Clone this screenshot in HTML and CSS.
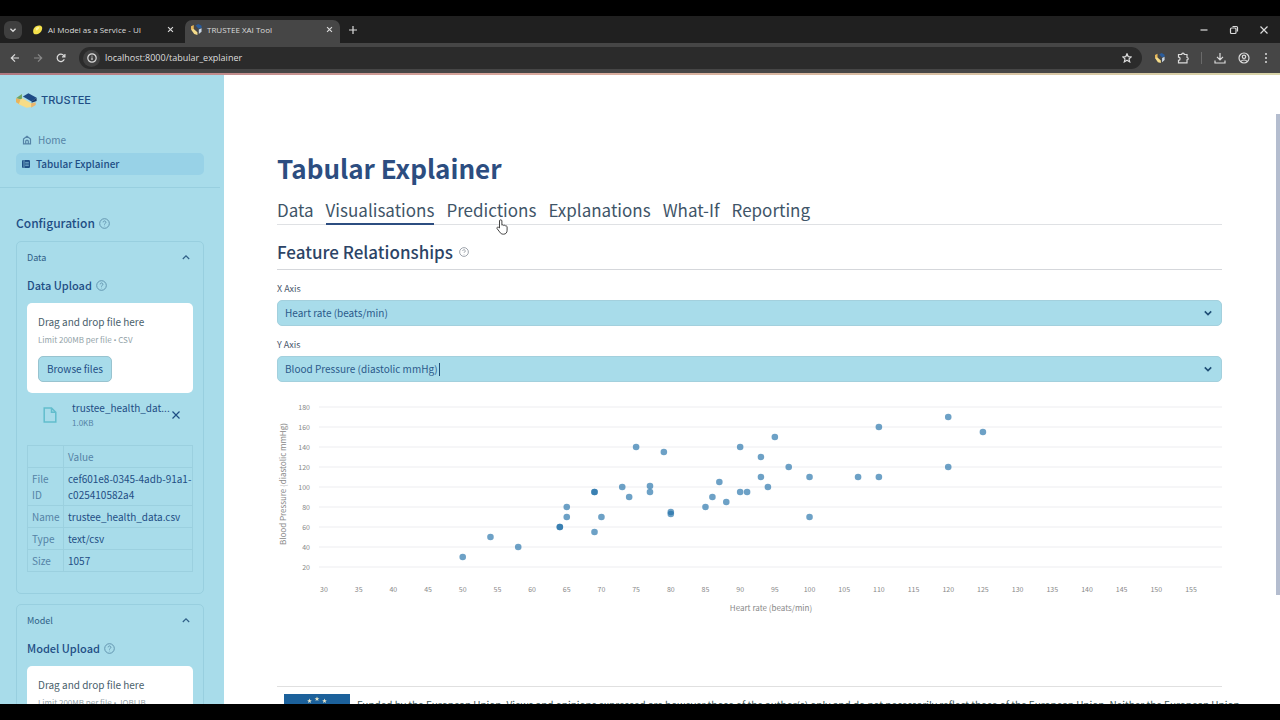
FILE: index.html
```html
<!DOCTYPE html>
<html lang="en">
<head>
<meta charset="utf-8">
<meta name="viewport" content="width=device-width, initial-scale=1">
<title>TRUSTEE XAI Tool</title>
<link rel="stylesheet" href="styles.css">
</head>
<body>

<!-- shared icons -->
<svg class="defs" aria-hidden="true">
  <symbol id="help" viewBox="0 0 24 24">
    <circle cx="12" cy="12" r="10.5"/>
    <path d="M9 9.5a3 3 0 1 1 4.6 2.5c-1 .6-1.6 1.2-1.6 2.3M12 17v1"/>
  </symbol>
  <symbol id="up" viewBox="0 0 10 10"><path d="M1.8 6 5 2.800l3.200 3.200"/></symbol>
  <symbol id="down" viewBox="0 0 10 10"><path d="M1.8 3.4 5 6.6l3.2-3.2"/></symbol>
  <symbol id="cross" viewBox="0 0 10 10"><path d="m1.5 1.5 7 7m0-7-7 7"/></symbol>
  <symbol id="mark" viewBox="0 0 24 16">
    <path fill="#6fa563" d="M0 5.500 6.500 1v6z"/>
    <path fill="#e9b45c" d="M0 5.500 5 7v6L0 10z"/>
    <path fill="#f7dc86" d="m5 7 2-1.500 9.500 5.500V15l-5 1L3 12z"/>
    <path fill="#1d4a86" d="m7.500 3.500 6-3.500 9 5-5.500 4z"/>
    <path fill="#17396c" d="m17 9 5.500-4v3.500L17 10.500z"/>
    <path fill="#eab56c" d="m16.500 11 5-1v3l-5 3z"/>
  </symbol>
  <symbol id="swirl" viewBox="0 0 12 12">
    <path fill="#e8b85a" d="M0 2.500 3 1v6L0 6z"/>
    <path fill="#f5dc8a" d="m0 6 3-.5 4 3.500v3L3.500 11z"/>
    <path fill="#2a5c9c" d="m5 1.500 3-1.500 3.500 2v2.500L8 5z"/>
    <path fill="#c9d6e4" d="m8.500 6 3-1.500v4l-3 2.500z"/>
  </symbol>
</svg>

<!-- browser chrome -->
<header class="browser">
  <div class="tabstrip">
    <button class="tab-search" aria-label="Search tabs"><svg class="line"><use href="#down"/></svg></button>
    <div class="btab">
      <svg class="fav" viewBox="0 0 12 12"><path fill="#f3e04a" d="M2 10.500C.5 8 1.500 4 4.500 2.500 7 1 10.500 1.500 11 3.500c.6 3-1.500 6-4 7-2 .8-4 .8-5 0z"/><path fill="#fff6a0" d="M4 5c1-1.500 3-2 4-1.500C8 5 6 7 4.500 7z"/></svg>
      <span>AI Model as a Service - UI</span>
      <button class="x" aria-label="Close tab"><svg class="line"><use href="#cross"/></svg></button>
    </div>
    <div class="btab current">
      <svg class="fav"><use href="#swirl"/></svg>
      <span>TRUSTEE XAI Tool</span>
      <button class="x" aria-label="Close tab"><svg class="line"><use href="#cross"/></svg></button>
    </div>
    <button class="newtab" aria-label="New tab"><svg class="line" viewBox="0 0 10 10"><path d="M5 1v8M1 5h8"/></svg></button>
    <div class="wincontrols">
      <button aria-label="Minimize"><svg class="line" viewBox="0 0 10 10"><path d="M1.500 5h7"/></svg></button>
      <button aria-label="Restore"><svg class="line" viewBox="0 0 10 10"><rect x="1.500" y="3" width="5.500" height="5.500" rx="1"/><path d="M3.500 1.500H7.500a1 1 0 0 1 1 1V6.500"/></svg></button>
      <button aria-label="Close"><svg class="line"><use href="#cross"/></svg></button>
    </div>
  </div>
  <div class="toolbar">
    <button aria-label="Back"><svg class="line" viewBox="0 0 10 10"><path d="M9 5H1.500M5 1.300 1.300 5 5 8.700"/></svg></button>
    <button aria-label="Forward" disabled><svg class="line" viewBox="0 0 10 10"><path d="M1 5h7.500M5 1.300 8.700 5 5 8.700"/></svg></button>
    <button aria-label="Reload"><svg class="line" viewBox="0 0 10 10"><path d="M8.300 6.300A3.700 3.700 0 1 1 7.800 2.600L8.800 3.700M8.900 1v2.900H6"/></svg></button>
    <div class="omnibox">
      <span class="info"><svg class="line" viewBox="0 0 10 10"><circle cx="5" cy="5" r="4.200"/><path d="M5 4.500v2.600M5 2.700v.8"/></svg></span>
      <input type="text" aria-label="Address" value="localhost:8000/tabular_explainer">
      <button aria-label="Bookmark"><svg class="line" viewBox="0 0 10 10"><path d="m5 .8 1.200 2.800 3 .3L7 5.900l.7 3L5 7.300 2.300 8.900l.7-3L.8 3.900l3-.3z"/></svg></button>
    </div>
    <div class="actions">
      <button aria-label="TRUSTEE extension"><svg class="ext"><use href="#swirl"/></svg></button>
      <button aria-label="Extensions"><svg class="line big" viewBox="0 0 12 12"><path d="M1.500 2.500h3.200a1.300 1.300 0 0 1 2.600 0h2.700v3a1.200 1.200 0 0 1 0 2.400v3H1.500V8.300a1.600 1.600 0 0 0 0-3.200z"/></svg></button>
      <span class="bar"></span>
      <button aria-label="Downloads"><svg class="line big" viewBox="0 0 12 12"><path d="M6 1v6.500M3 4.800l3 3 3-3M1 8.500V11h10V8.500"/></svg></button>
      <button aria-label="Profile"><svg class="line big" viewBox="0 0 12 12"><circle cx="6" cy="6" r="5"/><circle cx="6" cy="4.800" r="1.700"/><path d="M2.800 9.500c1.500-2 5-2 6.400 0"/></svg></button>
      <button aria-label="Menu"><svg class="dots" viewBox="0 0 8 12"><circle cx="4" cy="2" r="1"/><circle cx="4" cy="6" r="1"/><circle cx="4" cy="10" r="1"/></svg></button>
    </div>
  </div>
</header>

<div class="app">

  <!-- sidebar -->
  <aside class="sidebar">
    <div class="logo"><svg><use href="#mark"/></svg>TRUSTEE</div>
    <nav>
      <a href="#"><svg class="line" viewBox="0 0 10 10"><path d="M1.500 4 5 1.200 8.500 4v4.800h-7zM3.700 8.800V6.500a1.300 1.300 0 0 1 2.600 0v2.300"/></svg>Home</a>
      <a href="#" class="active"><svg viewBox="0 0 10 10"><rect x="0" y="0" width="10" height="10" rx="1.500" fill="#1f4e85"/><path d="M2.500 0v10M4 3h4.500M4 5h4.500M4 7h4.500" stroke="#9bd3e8" stroke-width=".8"/></svg>Tabular Explainer</a>
    </nav>
    <div class="config">
      <h2>Configuration <svg class="help"><use href="#help"/></svg></h2>

      <section class="expander">
        <button class="summary">Data <svg class="line"><use href="#up"/></svg></button>
        <h3>Data Upload <svg class="help"><use href="#help"/></svg></h3>
        <div class="dropzone">
          <p>Drag and drop file here</p>
          <small>Limit 200MB per file <span class="bullet">•</span> CSV</small>
          <button class="browse">Browse files</button>
        </div>
        <div class="file">
          <svg class="doc" viewBox="0 0 14 16"><path d="M1.200 1h7.300l4.300 4.300V15H1.200zM8.500 1v4.300h4.300"/></svg>
          <div class="filename"><p title="trustee_health_data.csv">trustee_health_dat...</p><small>1.0KB</small></div>
          <button aria-label="Remove file"><svg class="line"><use href="#cross"/></svg></button>
        </div>
        <table>
          <tr><th></th><th>Value</th></tr>
          <tr><th>File<br>ID</th><td>cef601e8-0345-4adb-91a1-<br>c025410582a4</td></tr>
          <tr><th>Name</th><td>trustee_health_data.csv</td></tr>
          <tr><th>Type</th><td>text/csv</td></tr>
          <tr><th>Size</th><td>1057</td></tr>
        </table>
      </section>

      <section class="expander">
        <button class="summary">Model <svg class="line"><use href="#up"/></svg></button>
        <h3>Model Upload <svg class="help"><use href="#help"/></svg></h3>
        <div class="dropzone">
          <p>Drag and drop file here</p>
          <small>Limit 200MB per file <span class="bullet">•</span> JOBLIB</small>
        </div>
      </section>
    </div>
  </aside>

  <!-- main -->
  <main>
    <h1>Tabular Explainer</h1>
    <div class="tabs" role="tablist">
      <button role="tab">Data</button>
      <button role="tab" class="selected" aria-selected="true">Visualisations</button>
      <button role="tab">Predictions
        <svg class="pointer" viewBox="0 0 12 16"><path d="M3.500 9V2a1.200 1.200 0 0 1 2.400 0v4.200c.5-.6 1.600-.5 1.800.3.600-.5 1.600-.3 1.700.5.700-.4 1.700 0 1.700.9v3.300c0 2.400-1.200 4-3.600 4-2 0-3-.9-3.900-2.300L1 9.500c-.4-1 .7-1.800 1.500-1.200z"/></svg>
      </button>
      <button role="tab">Explanations</button>
      <button role="tab">What-If</button>
      <button role="tab">Reporting</button>
    </div>
    <h2>Feature Relationships <svg class="help"><use href="#help"/></svg></h2>

    <label for="xaxis">X Axis</label>
    <div class="select">
      <select id="xaxis"><option>Heart rate (beats/min)</option></select>
      <svg class="line"><use href="#down"/></svg>
    </div>
    <label for="yaxis">Y Axis</label>
    <div class="select">
      <select id="yaxis"><option>Blood Pressure (diastolic mmHg)</option></select>
      <span class="caret"></span>
      <svg class="line"><use href="#down"/></svg>
    </div>

    <svg id="chart" class="chart" viewBox="0 0 945 224" role="img" aria-label="Blood Pressure against Heart rate"></svg>

    <footer>
      <svg class="flag" viewBox="0 0 66 44">
        <rect width="66" height="44" fill="#1c619b"/>
        <g id="stars" fill="#e8e6c8"></g>
      </svg>
      <p>Funded by the European Union. Views and opinions expressed are however those of the author(s) only and do not necessarily reflect those of the European Union. Neither the European Union</p>
    </footer>
  </main>
  <div class="scrollbar"></div>
</div>

<script>
  // [heart rate, blood pressure]
  var points = [
    [50,30],[54,50],[58,40],[64,60],[64,60],[65,70],[65,80],[69,55],[69,95],[69,95],
    [70,70],[73,100],[74,90],[75,140],[77,95],[77,101],[79,135],[80,75],[80,73],
    [85,80],[86,90],[87,105],[88,85],[90,95],[91,95],[90,140],[93,130],[93,110],
    [94,100],[95,150],[97,120],[100,110],[100,70],[107,110],[110,110],[110,160],
    [120,170],[120,120],[125,155]
  ];

  function px(v) { return 47 + (v - 30) * 867 / 125; }
  function py(v) { return 11 + (180 - v); }

  var out = '';
  // horizontal grid + y ticks
  for (var v = 20; v <= 180; v += 20) {
    out += '<line class="grid" x1="42" x2="945" y1="' + py(v) + '" y2="' + py(v) + '"/>';
    out += '<text x="33" y="' + (py(v) + 3) + '" text-anchor="end">' + v + '</text>';
  }
  // x ticks
  for (var h = 30; h <= 155; h += 5) {
    out += '<text x="' + px(h) + '" y="196" text-anchor="middle">' + h + '</text>';
  }
  out += '<text class="title" x="494" y="215" text-anchor="middle">Heart rate (beats/min)</text>';
  out += '<text class="title" transform="translate(9 88) rotate(-90)" text-anchor="middle">Blood Pressure (diastolic mmHg)</text>';
  points.forEach(function (p) {
    out += '<circle cx="' + px(p[0]) + '" cy="' + py(p[1]) + '" r="3.3"/>';
  });
  document.getElementById('chart').innerHTML = out;

  // ring of twelve stars
  var stars = '';
  for (var i = 0; i < 12; i++) {
    var a = i * Math.PI / 6;
    stars += '<path transform="translate(' + (33 + 15 * Math.sin(a)) + ' ' + (20 - 15 * Math.cos(a)) + ')" d="M0-2.500.7-.8 2.400-.8 1 .3 1.500 2 0 1-1.500 2-1 .3-2.400-.8-.7-.8z"/>';
  }
  document.getElementById('stars').innerHTML = stars;
</script>
</body>
</html>
```
FILE: styles.css
```css
* { box-sizing: border-box; }
body {
  margin: 0; padding: 16px 0; height: 100vh; overflow: hidden;
  display: flex; flex-direction: column;
  background: #000; color: #31496b;
  font: 10px/16px "Noto Sans CJK SC", "Open Sans", sans-serif;
}
h1, h2, h3, p { margin: 0; }
button { font: inherit; color: inherit; background: none; border: 0; padding: 0; }
a { color: inherit; text-decoration: none; }
svg { flex: none; display: block; }
.defs { position: absolute; width: 0; height: 0; }
.line { width: 10px; height: 10px; fill: none; stroke: currentColor; stroke-width: 1.2; }
.help { width: 11px; height: 11px; fill: none; stroke: #5d8fab; stroke-width: 2; }

/* browser chrome */
.browser {
  flex: none; padding-bottom: 2px;
  background: linear-gradient(90deg, #b07880, #d9a79c 40%, #d8d4a8);
  color: #dcdcdc;
  font: 8px/14px "Open Sans", sans-serif;
}
.browser button { display: flex; align-items: center; justify-content: center; }
.tabstrip { display: flex; align-items: center; height: 27px; padding: 0 4px; background: #202020; }
.browser .tab-search { width: 18px; height: 18px; border-radius: 6px; background: #3f3f3f; }
.tab-search .line { width: 8px; height: 8px; stroke-width: 1.6; }
.btab { display: flex; align-items: center; gap: 5px; width: 155px; height: 23px; margin-top: 4px; padding: 0 3px 4px 10px; }
.btab span { flex: 1; white-space: nowrap; }
.btab .line { width: 7px; height: 7px; stroke-width: 1.6; }
.fav { width: 11px; height: 11px; }
.btab.current { background: #464646; border-radius: 7px 7px 0 0; margin-left: 8px; padding: 0 7px 4px 6px; }
.btab.current + .newtab { margin-left: 8px; }
.wincontrols { display: flex; gap: 20px; margin-left: auto; padding-right: 7px; }
.wincontrols .line { width: 10px; height: 10px; }
.toolbar { display: flex; align-items: center; gap: 13px; height: 30px; padding: 0 10px; background: #464646; }
.toolbar button:disabled { color: #8a8a8a; }
.omnibox {
  flex: 1; display: flex; align-items: center; gap: 5px;
  height: 22px; padding: 0 10px 0 4px; border-radius: 11px; background: #2b2b2b;
}
.info { display: flex; align-items: center; justify-content: center; width: 17px; height: 17px; border-radius: 50%; background: #404040; }
.omnibox input { flex: 1; border: 0; padding: 0; background: none; color: #dedede; font: 9px/16px "Open Sans", sans-serif; }
.actions { display: flex; align-items: center; gap: 12px; }
.big { width: 12px; height: 12px; }
.ext { width: 10px; height: 10px; }
.dots { width: 8px; height: 12px; fill: #dcdcdc; }
.bar { width: 1px; height: 12px; background: #6a6a6a; }

.app { flex: 1; display: flex; min-height: 0; overflow: hidden; background: #fff; }

/* sidebar */
.sidebar { flex: none; width: 224px; overflow: hidden; background: #a8dcea; color: #1f4e85; }
.logo { display: flex; align-items: center; gap: 3px; height: 16px; margin: 17px 16px 0; font: 500 11px/16px Inter, sans-serif; }
.logo svg { width: 22px; height: 15px; }
nav { display: flex; flex-direction: column; gap: 2px; margin-right: 4px; padding: 21px 16px 12px; border-bottom: 1px solid #98cfdf; }
nav a { display: flex; align-items: center; gap: 6px; height: 22px; padding: 0 6px; border-radius: 5px; color: #5583a6; }
nav svg { width: 8px; height: 8px; stroke-width: 1; }
nav .active { background: #98d2e7; color: #1f4e85; font-weight: 500; }
.config { padding: 26px 20px 0 16px; }
.config h2, .config h3 { display: flex; align-items: center; gap: 4px; font-weight: 500; }
.config h2 { font-size: 12px; line-height: 18px; margin-bottom: 9px; }
.config h3 { font-size: 11px; line-height: 16px; margin-bottom: 10px; }
.expander { border: 1px solid #98cfdf; border-radius: 5px; padding: 0 10px 21px; margin-bottom: 10px; }
.summary { display: flex; align-items: center; justify-content: space-between; width: 100%; height: 32px; margin-bottom: 3px; padding-right: 2px; font-size: 9px; color: #2f5f87; }
.dropzone { padding: 11px; border-radius: 5px; background: #fff; color: #49606b; }
.dropzone p { line-height: 16px; }
small { display: block; font-size: 8px; line-height: 14px; }
.dropzone small { margin: 3px 0 9px; color: #93a3a8; }
.bullet { font-family: "Open Sans", sans-serif; }
.browse { display: block; height: 26px; padding: 0 8px; border: 1px solid #98c3cf; border-radius: 5px; background: #a8dcea; color: #1f4e85; }
.file { display: flex; align-items: center; gap: 15px; padding: 7px 12px 15px 16px; }
.doc { width: 14px; height: 16px; fill: none; stroke: #62bdcd; stroke-width: 1.5; }
.filename { flex: 1; min-width: 0; white-space: nowrap; }
.filename small { color: #5583a6; }
.file button { margin-left: -14px; }
table { width: 100%; border-collapse: collapse; table-layout: fixed; }
th, td { border: 1px solid #9bd0df; padding: 3px 0 2px 4px; text-align: left; vertical-align: top; font-weight: 400; white-space: nowrap; }
th { color: #5583a6; }
th:first-child { width: 36px; }

/* main */
main { flex: 1; min-width: 0; padding: 76px 54px 0 53px; }
h1 { font-size: 26px; line-height: 34px; color: #2c4d80; }
.tabs { display: flex; gap: 12px; margin-top: 11px; border-bottom: 1px solid #dfe1e4; font-size: 17px; line-height: 28px; color: #3f5568; }
.tabs button { position: relative; height: 29px; margin-bottom: -1px; border-bottom: 2px solid transparent; }
.tabs .selected { border-color: #2c4d80; }
.pointer { position: absolute; right: 28px; top: 23px; width: 12px; height: 16px; fill: #fff; stroke: #444; stroke-width: 1; }
main h2 { display: flex; align-items: center; gap: 6px; margin: 13px 0 11px; padding-bottom: 3px; border-bottom: 1px solid #d5d7db; font-size: 17px; line-height: 28px; font-weight: 500; color: #2c4466; }
main .help { width: 10px; height: 10px; stroke: #8a929b; }
label { display: block; font-size: 9px; line-height: 16px; color: #49566b; }
.select { position: relative; margin: 3px 0 11px; }
.select select { appearance: none; display: block; width: 100%; height: 26px; padding: 0 7px; border: 1px solid #a3d0dd; border-radius: 5px; background: #a8dcea; color: #2b5a8a; font: inherit; }
.select .line { position: absolute; right: 9px; top: 8px; stroke-width: 1.6; color: #1f4e75; }
.caret { position: absolute; left: 162px; top: 7px; width: 1px; height: 13px; background: #1f4e75; }
.chart { width: 100%; margin-top: 14px; overflow: visible; }
.chart text { font-size: 7px; fill: #888; }
.chart .title { font-size: 8px; }
.chart circle { fill: #1f6fa8; fill-opacity: .65; }
.grid { stroke: #ededf0; }
footer { display: flex; gap: 7px; margin-top: 66px; padding: 7px 0 0 7px; border-top: 1px solid #e0e0e0; color: #3e5a5a; }
.flag { width: 66px; height: 44px; }
footer p { padding-top: 3px; white-space: nowrap; }

.scrollbar { flex: none; width: 4px; height: 481px; margin-top: 39px; background: #b4bdcf; }
```
